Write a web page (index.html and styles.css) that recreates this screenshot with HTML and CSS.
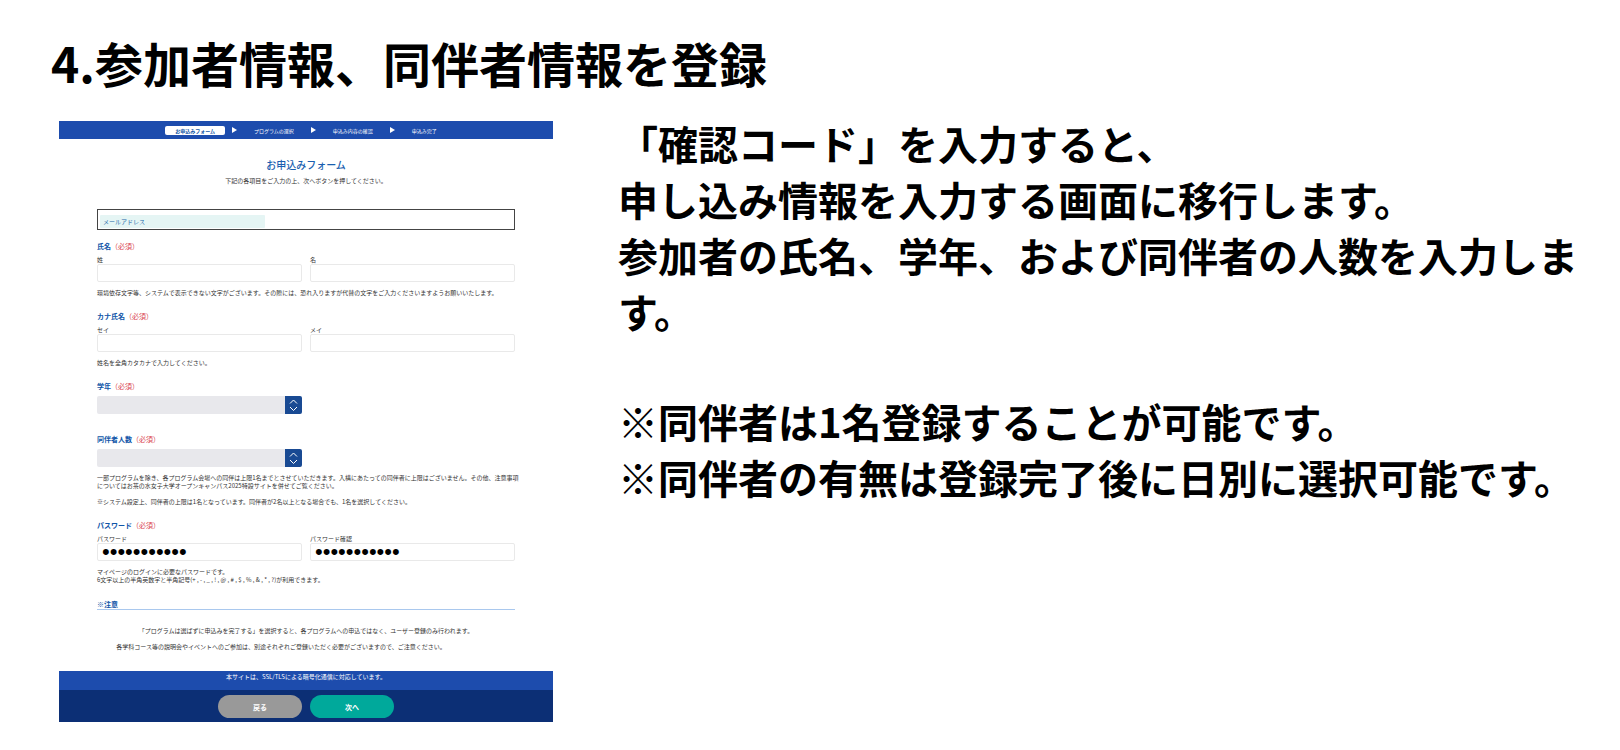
FILE: index.html
```
<!DOCTYPE html>
<html lang="ja">

<head>
  <meta charset="UTF-8">
  <meta name="viewport" content="width=device-width, initial-scale=1.0">
  <title>参加者情報、同伴者情報を登録</title>
  <link rel="stylesheet" href="styles.css">
</head>
<body>
  <h1 class="page-title">4.参加者情報、同伴者情報を登録</h1>

  <div class="container">
    <form class="form-panel">
      <ol class="steps">
        <li class="step active">お申込みフォーム</li>
        <li class="arrow"></li>
        <li class="step">プログラムの選択</li>
        <li class="arrow"></li>
        <li class="step">申込み内容の確認</li>
        <li class="arrow"></li>
        <li class="step">申込み完了</li>
      </ol>

      <div class="form-body">
        <h2 class="form-title">お申込みフォーム</h2>
        <p class="form-lead">下記の各項目をご入力の上、次へボタンを押してください。</p>

        <div class="mail-box">
          <div class="mail-label">メールアドレス</div>
        </div>

        <section class="field">
          <h3 class="field-title">氏名<span class="required">（必須）</span></h3>
          <div class="input-row">
            <div class="input-group">
              <label for="last-name">姓</label>
              <input type="text" id="last-name">
            </div>
            <div class="input-group">
              <label for="first-name">名</label>
              <input type="text" id="first-name">
            </div>
          </div>
          <p class="note">環境依存文字等、システムで表示できない文字がございます。その際には、恐れ入りますが代替の文字をご入力くださいますようお願いいたします。</p>
        </section>

        <section class="field">
          <h3 class="field-title">カナ氏名<span class="required">（必須）</span></h3>
          <div class="input-row">
            <div class="input-group">
              <label for="last-kana">セイ</label>
              <input type="text" id="last-kana">
            </div>
            <div class="input-group">
              <label for="first-kana">メイ</label>
              <input type="text" id="first-kana">
            </div>
          </div>
          <p class="note">姓名を全角カタカナで入力してください。</p>
        </section>

        <section class="field field-grade">
          <h3 class="field-title"><label for="grade">学年</label><span class="required">（必須）</span></h3>
          <div class="input-row">
            <div class="select-box">
              <select id="grade"><option></option></select>
              <span class="select-icon">
                <svg viewBox="0 0 17 18" width="17" height="18"><path d="M5 7.5 8.5 4 12 7.5M5 11 8.5 14.5 12 11" fill="none" stroke="#fff" stroke-width="1"/></svg>
              </span>
            </div>
          </div>
        </section>

        <section class="field">
          <h3 class="field-title"><label for="companions">同伴者人数</label><span class="required">（必須）</span></h3>
          <div class="input-row">
            <div class="select-box">
              <select id="companions"><option></option></select>
              <span class="select-icon">
                <svg viewBox="0 0 17 18" width="17" height="18"><path d="M5 7.5 8.5 4 12 7.5M5 11 8.5 14.5 12 11" fill="none" stroke="#fff" stroke-width="1"/></svg>
              </span>
            </div>
          </div>
          <p class="note">一部プログラムを除き、各プログラム会場への同伴は上限1名までとさせていただきます。入構にあたっての同伴者に上限はございません。その他、注意事項<br>についてはお茶の水女子大学オープンキャンパス2025特設サイトを併せてご覧ください。<br><br>※システム設定上、同伴者の上限は1名となっています。同伴者が2名以上となる場合でも、1名を選択してください。</p>
        </section>

        <section class="field">
          <h3 class="field-title">パスワード<span class="required">（必須）</span></h3>
          <div class="input-row">
            <div class="input-group">
              <label for="password">パスワード</label>
              <input type="password" id="password" value="abcdefghijk">
            </div>
            <div class="input-group">
              <label for="password-confirm">パスワード確認</label>
              <input type="password" id="password-confirm" value="abcdefghijk">
            </div>
          </div>
          <p class="note">マイページのログインに必要なパスワードです。<br>6文字以上の半角英数字と半角記号(+ , - , _ , ! , @ , # , $ , % , &amp; , * , ?)が利用できます。</p>
        </section>

        <h3 class="caution-title">※注意</h3>
        <div class="caution">
          <p>「プログラムは選ばずに申込みを完了する」を選択すると、各プログラムへの申込ではなく、ユーザー登録のみ行われます。</p>
          <p class="caution-left">各学科コース等の説明会やイベントへのご参加は、別途それぞれご登録いただく必要がございますので、ご注意ください。</p>
        </div>
      </div>

      <p class="ssl">本サイトは、SSL/TLSによる暗号化通信に対応しています。</p>
      <div class="buttons">
        <button type="button" class="btn-back">戻る</button>
        <button type="submit" class="btn-next">次へ</button>
      </div>
    </form>

    <div class="description">
      <p>「確認コード」を入力すると、<br>申し込み情報を入力する画面に移行します。<br>参加者の氏名、学年、および同伴者の人数を入力します。</p>
      <p>※同伴者は1名登録することが可能です。<br>※同伴者の有無は登録完了後に日別に選択可能です。</p>
    </div>
  </div>
</body>
</html>
```

FILE: styles.css
```
* {
  box-sizing: border-box;
}

body {
  margin: 0;
  background: #fff;
  color: #000;
  font-family: "Noto Sans CJK JP", sans-serif;
}

h1, h2, h3, p, ol {
  margin: 0;
  padding: 0;
}

.page-title {
  padding: 26px 51px 0;
  font-size: 48px;
  line-height: 72px;
  font-weight: 700;
}

.container {
  display: grid;
  grid-template-columns: minmax(0, 494fr) minmax(0, 966fr);
  gap: 65px;
  align-items: start;
  padding: 17px 36px 24px 59px;
}

/* form */

.form-panel {
  margin-top: 6px;
  color: #333;
  font-size: 6px;
  line-height: 8px;
}

.steps {
  display: flex;
  justify-content: center;
  align-items: center;
  gap: 7px;
  height: 18px;
  background: #1d4cad;
  color: #fff;
  font-size: 5px;
  line-height: 9px;
  list-style: none;
}

.step {
  padding: 0 10px;
}

.step.active {
  border-radius: 2px;
  background: #fff;
  color: #1558a8;
  font-weight: 700;
}

.arrow {
  border-left: 5px solid #fff;
  border-top: 3px solid transparent;
  border-bottom: 3px solid transparent;
}

.form-body {
  padding: 18px 38px 20px;
}

.form-title {
  color: #1a5fb0;
  font-size: 10px;
  line-height: 16px;
  font-weight: 500;
  text-align: center;
}

.form-lead {
  margin-top: 4px;
  text-align: center;
}

.mail-box {
  height: 21px;
  margin: 24px 0 11px;
  padding: 5px 2px 1px;
  border: 1px solid #444;
}

.mail-label {
  width: 40%;
  padding: 0 3px;
  border-radius: 1px;
  background: #e5f5f4;
  color: #1b68a8;
  line-height: 13px;
}

.field {
  margin-bottom: 14px;
}

.field-grade {
  margin-bottom: 20px;
}

.field-title {
  color: #0f55a8;
  font-size: 7px;
  line-height: 10px;
  font-weight: 700;
}

.required {
  color: #d9434e;
  font-weight: 400;
}

.input-row {
  display: grid;
  grid-template-columns: 1fr 1fr;
  gap: 8px;
  margin-top: 5px;
}

.input-group label {
  display: block;
  line-height: 8px;
}

.input-group input {
  display: block;
  width: 100%;
  height: 18px;
  padding: 0 4px;
  border: 1px solid #e9e9e9;
  border-radius: 2px;
  background: #fff;
  color: #000;
  font-size: 7px;
}

.input-group input[type="password"] {
  font-family: "Liberation Sans", sans-serif;
  font-size: 22px;
}

.select-box {
  display: flex;
  height: 18px;
  border-radius: 2px;
  overflow: hidden;
}

.select-box select {
  flex: 1;
  padding: 0 4px;
  border: 0;
  background: #e8e8ec;
  font-size: 7px;
  appearance: none;
}

.select-icon {
  display: flex;
  background: #194a93;
}

.note {
  margin-top: 7px;
  white-space: nowrap;
}

.caution-title {
  margin-top: 15px;
  border-bottom: 1px solid #a9c8ee;
  color: #0f55a8;
  font-size: 7px;
  line-height: 10px;
  font-weight: 700;
}

.caution {
  display: grid;
  gap: 8px;
  padding-top: 17px;
  text-align: center;
}

.caution-left {
  padding-right: 50px;
}

.ssl {
  height: 19px;
  padding-top: 2px;
  background: #1d4cad;
  color: #fff;
  text-align: center;
}

.buttons {
  display: flex;
  justify-content: center;
  gap: 8px;
  padding: 5px 0 4px;
  background: #0c2f75;
}

.buttons button {
  width: 84px;
  height: 23px;
  border: 0;
  border-radius: 12px;
  color: #fff;
  font-family: inherit;
  font-size: 7px;
  font-weight: 700;
}

.btn-back {
  background: #999;
}

.btn-next {
  background: #00a99b;
}

/* text on the right */

.description {
  font-size: 40px;
  line-height: 56px;
  font-weight: 700;
}

.description p + p {
  margin-top: 54px;
}
```
